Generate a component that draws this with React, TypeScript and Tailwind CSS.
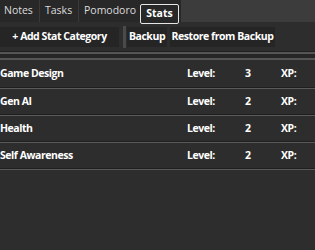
import React from "react";

const rows = [
  { name: "Game Design", level: 3 },
  { name: "Gen AI", level: 2 },
  { name: "Health", level: 2 },
  { name: "Self Awareness", level: 2 },
];

export default function App() {
  return (
    <div
      className="w-[315px] h-[250px] bg-[#2d2d2d] text-white overflow-hidden"
      style={{ fontFamily: '"Open Sans", "Noto Sans", sans-serif' }}
    >
      <div className="flex h-[22px] bg-[#3c3c3c] text-[10.5px] text-[#dcdcdc]">
        <div className="flex bg-[#282828] h-full">
          <div className="w-[39px] pl-[4px] flex items-center">Notes</div>
          <div className="w-[1px] h-full bg-[#3a3a3a]" />
          <div className="w-[38px] pl-[5px] flex items-center">Tasks</div>
          <div className="w-[1px] h-full bg-[#3a3a3a]" />
          <div className="w-[61px] pl-[5px] flex items-center">Pomodoro</div>
          <div className="w-[41px] h-full relative">
            <div className="absolute left-0 top-[4px] w-[39px] h-[20px] border border-[#e6e6e6] rounded-[2px] bg-[#282828] flex items-center justify-center font-bold text-white z-10">
              Stats
            </div>
          </div>
        </div>
      </div>
      <div className="flex items-center h-[29px] text-[10.5px] font-bold tracking-[-0.45px]">
        <div className="w-[119px] h-[20px] bg-[#252525] flex items-center justify-center">+ Add Stat Category</div>
        <div className="w-[3px] h-[22px] bg-[#4a4a4a] ml-[4px]" />
        <div className="w-[40px] h-[20px] bg-[#252525] flex items-center justify-center ml-[1px]">Backup</div>
        <div className="w-[105px] h-[20px] bg-[#252525] flex items-center justify-center ml-[3px]">Restore from Backup</div>
      </div>
      <div className="h-[1px] bg-[#1f1f1f]" />
      <div className="h-[2px] bg-[#555555]" />
      <div className="h-[4px] bg-[#262626]" />
      <div className="h-[2px] bg-[#555555]" />
      {rows.map((r, i) => (
        <div key={r.name}>
          <div
            className={`grid grid-cols-[187px_58px_36px_1fr] items-center ${i === 0 ? "h-[27px]" : "h-[25px]"} text-[10.5px] font-bold tracking-[-0.45px]`}
          >
            <div>{r.name}</div>
            <div>Level:</div>
            <div>{r.level}</div>
            <div>XP:</div>
          </div>
          <div className="h-[1px] bg-[#1f1f1f]" />
          <div className="h-[1px] bg-[#5a5a5a]" />
        </div>
      ))}
    </div>
  );
}
